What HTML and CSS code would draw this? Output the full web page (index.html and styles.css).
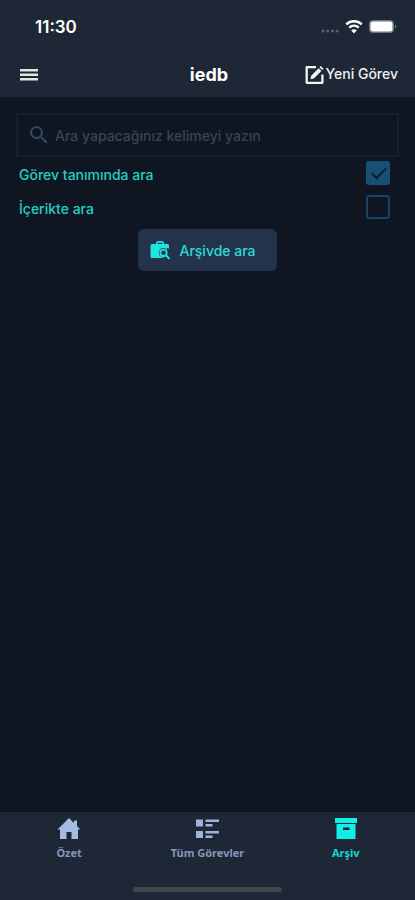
FILE: index.html
```html
<!DOCTYPE html>
<html lang="tr">
<head>
<meta charset="utf-8">
<meta name="viewport" content="width=device-width, initial-scale=1">
<title>iedb</title>
<link rel="stylesheet" href="styles.css">
</head>
<body>
<header class="top">
  <div class="status">
    <span class="clock">11:30</span>
    <span class="indicators">
      <svg width="18" height="20" viewBox="0 0 18 20" fill="#596271" aria-hidden="true"><circle cx="2" cy="14" r="1.5"/><circle cx="6.700" cy="14" r="1.500"/><circle cx="11.400" cy="14" r="1.500"/><circle cx="16" cy="14" r="1.500"/></svg>
      <svg width="18" height="20" viewBox="0 0 18 20" fill="none" stroke="#fff" stroke-width="2.300" aria-hidden="true"><path d="M1.200 7.400a11.200 11.200 0 0 1 15.600 0M4.200 10.600a7 7 0 0 1 9.600 0"/><path d="M9 16.500l-2.800-3a4 4 0 0 1 5.600 0z" fill="#fff" stroke="none"/></svg>
      <svg width="28" height="20" viewBox="0 0 28 20" aria-hidden="true"><rect x="0" y="3" width="25" height="13" rx="4" fill="#6d7480"/><rect x="1.500" y="4.500" width="22" height="10" rx="2.500" fill="#fff"/><path d="M26 7.500q2.500 2 0 4z" fill="#7a818c"/></svg>
    </span>
  </div>
  <div class="bar">
    <button class="menu" type="button" aria-label="Menü">
      <svg width="18" height="14" viewBox="0 0 18 14" fill="#e2e4df" aria-hidden="true"><path d="M0 1h18v2.500H0zM0 5.500h18V8H0zM0 10h18v2.500H0z"/></svg>
    </button>
    <h1 class="title">iedb</h1>
    <button class="new" type="button">
      <svg width="20" height="20" viewBox="0 0 20 20" fill="none" stroke="#f1f3f5" aria-hidden="true"><path d="M11 2.200H1.700v15.600h15.700V9.500" stroke-width="2.300" stroke-linejoin="round"/><path d="M5.500 14.300l.7-3.600 7.400-7.500 2.800 2.700-7.500 7.600z" fill="#f1f3f5" stroke="none"/><path d="M14.500 2.400l1.200-1.300 2.900 2.700-1.300 1.300z" fill="#f1f3f5" stroke="none"/></svg>
      <span class="new-text">Yeni Görev</span>
    </button>
  </div>
</header>

<main class="content">
  <label class="search">
    <svg width="24" height="24" viewBox="0 0 24 24" fill="#2c4a72" aria-hidden="true"><path d="M15.500 14h-.79l-.28-.27A6.471 6.471 0 0 0 16 9.500 6.500 6.500 0 1 0 9.500 16c1.610 0 3.090-.59 4.230-1.570l.27.28v.79l5 4.990L20.490 19l-4.990-5zm-6 0C7.010 14 5 11.990 5 9.500S7.010 5 9.500 5 14 7.010 14 9.500 11.990 14 9.500 14z"/></svg>
    <input class="search-input" type="text" aria-label="Arama" placeholder="Ara yapacağınız kelimeyi yazın">
  </label>
  <div class="option">
    <label for="in-title">Görev tanımında ara</label>
    <span class="check">
      <input id="in-title" type="checkbox" checked>
      <svg class="tick" viewBox="0 0 24 24" fill="none" stroke="#0d1a29" stroke-width="2" aria-hidden="true"><path d="M6 12.500l4.500 4.500L20 7.500"/></svg>
    </span>
  </div>
  <div class="option">
    <label for="in-body">İçerikte ara</label>
    <span class="check"><input id="in-body" type="checkbox"></span>
  </div>
  <button class="submit" type="button">
    <svg width="20" height="20" viewBox="0 0 20 20" aria-hidden="true"><path d="M2 4h4V2.500L7.500 1h5L14 2.500V4h3.500Q19 4 19 5.500V18H2Q.5 18 .5 16.500v-11Q.5 4 2 4zM7.700 4h4.600V2.700H7.700z" fill="#1fe5dc" fill-rule="evenodd"/><path d="M17 19.500l3-1.500V9l-3-1z" fill="#23334b"/><circle cx="13.500" cy="12.800" r="4.700" fill="#23334b"/><path d="M12 18.500l5-3 3 3.500z" fill="#23334b"/><circle cx="13.500" cy="12.800" r="3.200" fill="none" stroke="#1fe5dc" stroke-width="1.800"/><path d="M15.700 15l3.800 3.800" stroke="#1fe5dc" stroke-width="2"/></svg>
    <span>Arşivde ara</span>
  </button>
</main>

<nav class="tabs">
  <div class="tab-row">
    <a class="tab" href="#ozet">
      <svg width="26" height="24" viewBox="0 0 26 24" fill="#a3bce0" aria-hidden="true"><path d="M13 1L1.500 12.500H4V22h6.500v-7h5v7H22v-9.500h2.500L21 9V3.500h-3V6z"/></svg>
      <span>Özet</span>
    </a>
    <a class="tab" href="#gorevler">
      <svg width="26" height="24" viewBox="0 0 26 24" fill="#9fb4d8" aria-hidden="true"><path d="M2 2.500h7v7H2zM2 14h7v7H2zM11.500 2.500H25V5H11.500zM11.500 7h7v2.500h-7zM11.500 14H25v2.500H11.500zM11.500 18.500h7V21h-7z"/></svg>
      <span>Tüm Görevler</span>
    </a>
    <a class="tab active" href="#arsiv" aria-current="page">
      <svg width="26" height="24" viewBox="0 0 26 24" fill="#13eee8" aria-hidden="true"><path d="M2 1h22v5H2z"/><path d="M3.500 7h19v15h-19zM10 10.500v2.500h6.500v-2.500z" fill-rule="evenodd"/></svg>
      <span>Arşiv</span>
    </a>
  </div>
  <div class="home-line"></div>
</nav>
</body>
</html>
```

FILE: styles.css
```css
* { box-sizing: border-box; }

body {
  margin: 0;
  min-height: 100vh;
  display: flex;
  flex-direction: column;
  background: #0f1622;
  color: #fff;
  font-family: Inter, "Liberation Sans", sans-serif;
}

button {
  font: inherit;
  color: inherit;
  border: 0;
  padding: 0;
  background: none;
}

svg { display: block; flex: none; }

.top { background: #1e2736; }

.status {
  display: flex;
  align-items: center;
  justify-content: space-between;
  height: 53px;
  padding: 0 18px 0 35px;
}

.clock { font-size: 17px; font-weight: 600; }

.indicators { display: flex; align-items: center; gap: 6px; }

.bar {
  display: grid;
  grid-template-columns: 1fr auto 1fr;
  align-items: center;
  height: 44px;
  padding: 0 17px 0 20px;
}

.menu { justify-self: start; }

.title { margin: 0; font-size: 18px; line-height: 24px; font-weight: 700; }

.new {
  justify-self: end;
  display: flex;
  align-items: center;
  font-size: 14px;
  font-weight: 500;
  color: #eef0f3;
}

.new-text { padding-bottom: 4px; }

.content {
  flex: 1;
  display: flex;
  flex-direction: column;
  padding: 16px;
}

.search {
  display: flex;
  align-items: center;
  gap: 4px;
  height: 44px;
  padding: 0 9px;
  border: 2px solid #12202f;
}

.search-input {
  flex: 1;
  min-width: 0;
  padding: 0;
  border: 0;
  outline: 0;
  background: none;
  color: #cbd5e1;
  font: inherit;
  font-size: 14px;
  font-weight: 500;
}

.search-input::placeholder { color: #3b4351; opacity: 1; }

.option {
  display: flex;
  align-items: center;
  justify-content: space-between;
  height: 34px;
  padding: 0 9px 0 3px;
  color: #22cfc2;
  font-size: 14px;
  font-weight: 500;
}

.check { position: relative; width: 24px; height: 26px; }

.check input {
  appearance: none;
  display: block;
  width: 24px;
  height: 24px;
  margin: 0;
  border: 2px solid #174465;
  border-radius: 3px;
}

.check input:checked { background: #174f76; border-color: #174f76; }

.tick {
  position: absolute;
  inset: 0 0 auto;
  width: 24px;
  height: 24px;
  pointer-events: none;
}

.submit {
  align-self: center;
  display: flex;
  align-items: center;
  gap: 9px;
  height: 42px;
  margin-top: 4px;
  padding: 0 21px 0 12px;
  border-radius: 6px;
  background: #23334b;
  color: #2bdcd3;
  font-size: 14px;
  font-weight: 500;
}

.tabs { padding-bottom: 8px; background: #1e2736; }

.tab-row { display: grid; grid-template-columns: repeat(3, 1fr); padding-top: 5px; }

.tab {
  display: flex;
  flex-direction: column;
  align-items: center;
  gap: 4px;
  color: #8497b8;
  font-family: "Noto Sans", sans-serif;
  font-size: 11px;
  line-height: 16px;
  font-weight: 700;
  text-decoration: none;
}

.tab.active { color: #18d4d4; }

.home-line {
  width: 36%;
  height: 5px;
  margin: 26px auto 0;
  border-radius: 3px;
  background: #44464c;
}
```
